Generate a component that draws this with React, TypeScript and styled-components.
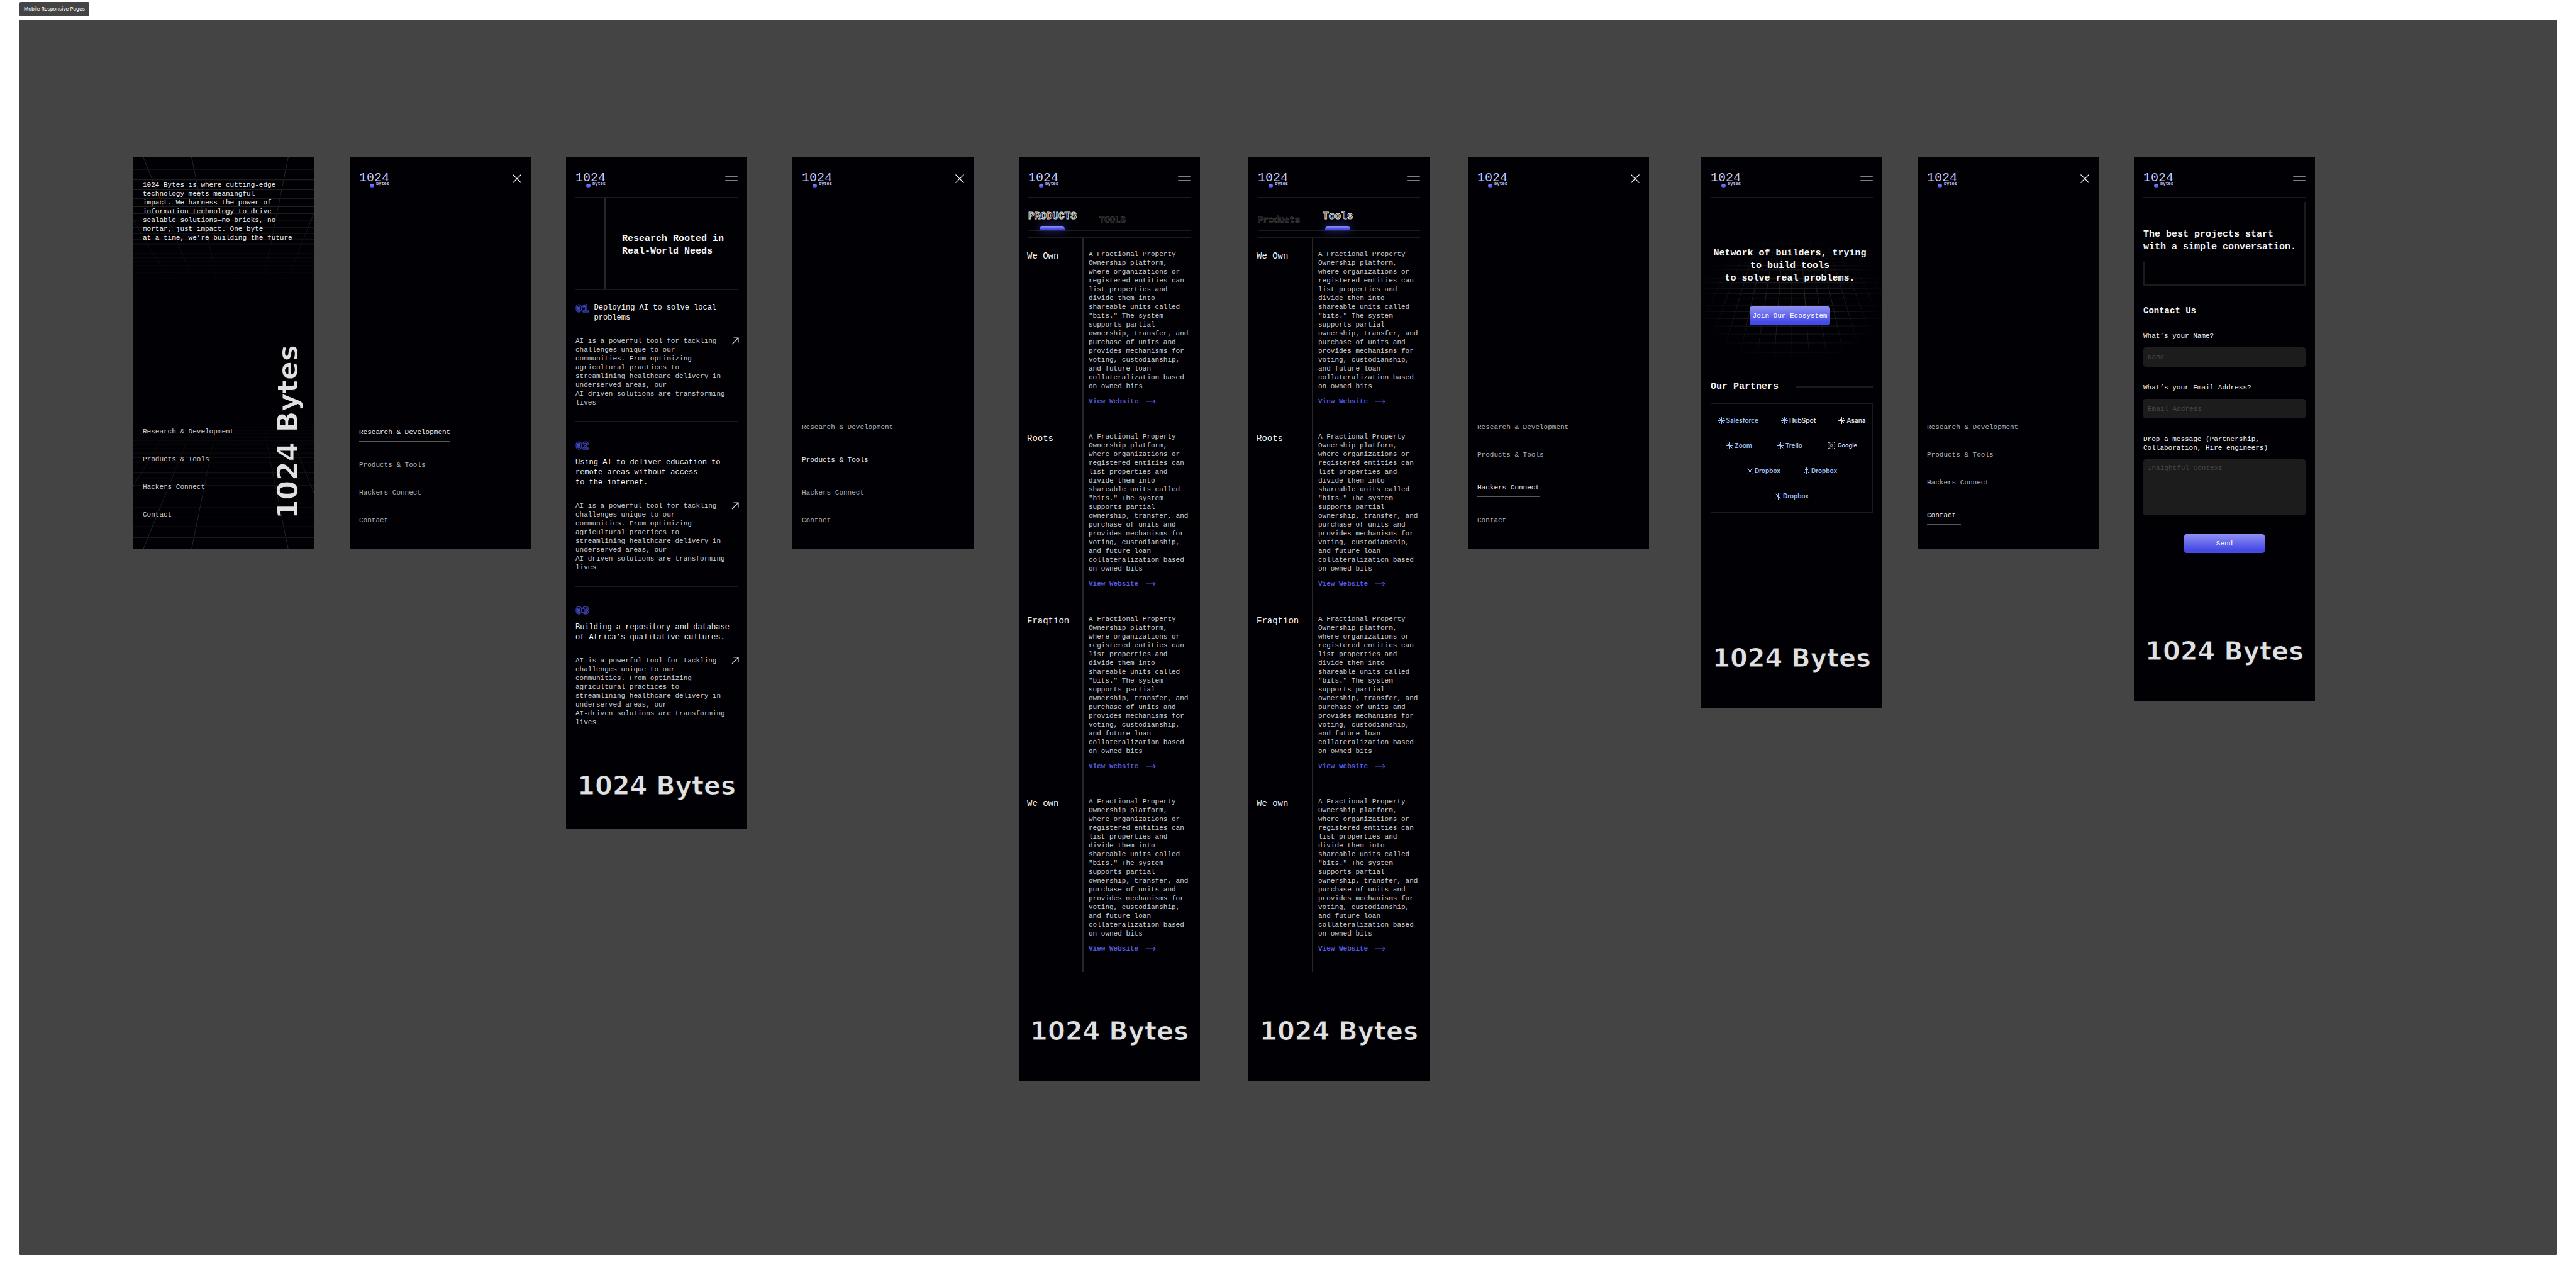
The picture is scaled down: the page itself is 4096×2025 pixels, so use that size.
import React from "react";
import styled, { createGlobalStyle, css } from "styled-components";

const mono = `"Liberation Mono", "DejaVu Sans Mono", monospace`;
const ink = "#010005";
const line = "#1b1b1b";
const indigo = "linear-gradient(180deg, #8f90f2 0%, #4549e6 85%)";

const GlobalStyle = createGlobalStyle`
  *, *::before, *::after { box-sizing: border-box; }
  body { margin: 0; background: #fff; font-family: ${mono}; }
  p, h1, h2, h3, ul { margin: 0; padding: 0; font-weight: 400; }
  ul { list-style: none; }
  a { color: inherit; text-decoration: none; }
  button { border: 0; padding: 0; background: none; font: inherit; color: inherit; }
`;

/* ---------- canvas ---------- */

const Page = styled.main`
  padding: 3px 31px 31px;
`;

const BoardLabel = styled.h1`
  width: fit-content;
  margin-bottom: 5px;
  padding: 0 7px;
  border-radius: 2px;
  background: #444;
  color: #fff;
  font: 400 8px/23px Inter, sans-serif;
`;

const Board = styled.div`
  display: flex;
  align-items: flex-start;
  padding: 219px 0 277px 181px;
  background: #444;
  border-radius: 1px;
`;

const Phone = styled.section<{ $gap?: number; $end?: number }>`
  position: relative;
  flex: 0 0 288px;
  display: flex;
  flex-direction: column;
  min-height: 623px;
  margin-left: ${(p) => p.$gap ?? 0}px;
  padding: 0 15px ${(p) => p.$end ?? 57}px;
  background: ${ink};
  color: #f4f4f4;
  overflow: hidden;
`;

const Backdrop = styled.svg`
  position: absolute;
  inset: 0;
  width: 100%;
  height: 100%;
  pointer-events: none;
`;

/* ---------- header ---------- */

const Header = styled.header<{ $ruled?: boolean }>`
  display: flex;
  justify-content: space-between;
  align-items: flex-start;
  height: 65px;
  padding-top: 22px;
  border-bottom: 2px solid ${(p) => (p.$ruled ? line : "transparent")};
`;

const LogoLink = styled.a`
  display: flex;
  flex-direction: column;
  color: #c6c6f8;
`;

const LogoNumber = styled.span`
  font-size: 20px;
  line-height: 22px;
`;

const LogoTag = styled.span`
  display: flex;
  align-items: flex-end;
  gap: 3px;
  margin: -6px 0 0 17px;
  font: 700 7px/8px ${mono};
  color: #c2c2ee;
`;

const Dot = styled.i`
  width: 7px;
  height: 7px;
  margin-bottom: -3px;
  border-radius: 50%;
  background: linear-gradient(180deg, #8385f6, #3f45e6);
`;

const IconButton = styled.button`
  display: flex;
  align-items: center;
  height: 23px;
  color: #fff;
`;

const CloseIcon = () => (
  <svg width="14" height="14" viewBox="0 0 14 14" stroke="currentColor" strokeWidth="1.2" fill="none">
    <path d="M.5.5l13 13M13.5.5l-13 13" />
  </svg>
);

const MenuIcon = () => (
  <svg width="20" height="9" viewBox="0 0 20 9" stroke="currentColor" strokeWidth="1.2" strokeLinecap="round">
    <path d="M.6.8h18.8M.6 8.2h18.8" />
  </svg>
);

const TopBar = ({ open }: { open?: boolean }) => (
  <Header $ruled={!open}>
    <LogoLink href="#" aria-label="1024 bytes">
      <LogoNumber>1024</LogoNumber>
      <LogoTag>
        <Dot />
        bytes
      </LogoTag>
    </LogoLink>
    <IconButton aria-label={open ? "Close menu" : "Open menu"}>{open ? <CloseIcon /> : <MenuIcon />}</IconButton>
  </Header>
);

/* ---------- menu ---------- */

const Nav = styled.nav`
  position: relative;
  display: flex;
  flex-direction: column;
  align-items: flex-start;
  gap: 30px;
  margin-top: auto;
`;

const NavLink = styled.a<{ $active?: boolean; $bright?: boolean }>`
  font-size: 11px;
  line-height: 14px;
  color: ${(p) => (p.$active ? "#ececec" : p.$bright ? "#d2d2d2" : "#b0b0b0")};
  ${(p) =>
    p.$active &&
    css`
      min-width: 54px;
      padding: 8px 0 7px;
      border-bottom: 1px solid #58585c;
    `}
`;

const LINKS = ["Research & Development", "Products & Tools", "Hackers Connect", "Contact"];

const MainNav = ({ active, bright }: { active?: number; bright?: boolean }) => (
  <Nav>
    {LINKS.map((text, i) => (
      <NavLink key={text} href="#" $active={i === active} $bright={bright}>
        {text}
      </NavLink>
    ))}
  </Nav>
);

const MenuScreen = ({ active, gap }: { active: number; gap: number }) => (
  <Phone $gap={gap} $end={39}>
    <TopBar open />
    <MainNav active={active} />
  </Phone>
);

/* ---------- shared text ---------- */

const Wordmark = styled.p<{ $top: number }>`
  margin-top: ${(p) => p.$top}px;
  font: 700 40px/44px "DejaVu Sans", sans-serif;
  color: #e0e0e0;
  -webkit-text-stroke: 1px ${ink};
  text-align: center;
  white-space: nowrap;
`;

const VerticalWordmark = styled.p`
  position: absolute;
  right: 18px;
  bottom: 48px;
  font: 700 44px/48px "DejaVu Sans", sans-serif;
  color: #e0e0e0;
  -webkit-text-stroke: 1px ${ink};
  white-space: nowrap;
  writing-mode: vertical-rl;
  transform: rotate(180deg);
`;

const Heading = styled.h2`
  position: relative;
  font-size: 15px;
  line-height: 20px;
  font-weight: 700;
  white-space: pre-line;
`;

const Copy = styled.p`
  font-size: 11px;
  line-height: 14px;
  color: #cfcfcf;
  white-space: pre-line;
`;

const ActionButton = styled.button`
  position: relative;
  align-self: center;
  width: 128px;
  height: 30px;
  border-radius: 4px;
  background: ${indigo};
  color: #fff;
  font-size: 11px;
  line-height: 14px;
`;

/* ---------- home ---------- */

const Intro = styled(Copy)`
  position: relative;
  margin-top: 37px;
  color: #f0f0f0;
`;

const ROWS = [76, 117, 155, 190, 221, 248, 276, 302, 325, 347, 366, 384, 402, 419, 434, 449, 463, 476, 488, 500, 512, 523];
const RAYS = [-5, -4, -3, -2, -1, 0, 1, 2, 3, 4, 5];

const HalfGrid = ({ flip }: { flip?: boolean }) => {
  const at = (y: number) => (flip ? 1576 - y : y);
  return (
    <g>
      {ROWS.map((y) => (
        <path key={y} d={`M48 ${at(y)}H1173`} vectorEffect="non-scaling-stroke" />
      ))}
      {RAYS.map((n) => (
        <path key={n} d={`M${710 + n * 300} ${at(30)}L${710 + n * 138} ${at(530)}`} vectorEffect="non-scaling-stroke" />
      ))}
    </g>
  );
};

const TunnelGrid = () => (
  <Backdrop viewBox="48 30 1125 1516" preserveAspectRatio="none" aria-hidden="true">
    <defs>
      <linearGradient id="tunnelFade" x1="0" y1="0" x2="0" y2="1">
        <stop offset="0" stopColor="#fff" />
        <stop offset=".14" stopColor="#fff" stopOpacity=".75" />
        <stop offset=".34" stopColor="#fff" stopOpacity="0" />
        <stop offset=".66" stopColor="#fff" stopOpacity="0" />
        <stop offset=".86" stopColor="#fff" stopOpacity=".75" />
        <stop offset="1" stopColor="#fff" />
      </linearGradient>
      <mask id="tunnelMask" maskUnits="userSpaceOnUse" x="48" y="30" width="1125" height="1516">
        <rect x="48" y="30" width="1125" height="1516" fill="url(#tunnelFade)" />
      </mask>
    </defs>
    <g mask="url(#tunnelMask)" stroke="#2a2a2a" fill="none">
      <HalfGrid />
      <HalfGrid flip />
    </g>
  </Backdrop>
);

/* ---------- research ---------- */

const Hero = styled.div`
  display: grid;
  grid-template-columns: 48px 1fr;
  height: 146px;
  border-bottom: 2px solid ${line};
`;

const HeroRail = styled.div`
  border-right: 2px solid #262626;
`;

const HeroText = styled.div`
  display: flex;
  align-items: center;
  padding: 5px 0 0 26px;
  white-space: nowrap;
`;

const Article = styled.article<{ $inline?: boolean; $last?: boolean }>`
  padding: ${(p) => (p.$inline ? 20 : 28)}px 0 ${(p) => (p.$last ? 0 : 22)}px;
  border-bottom: ${(p) => (p.$last ? 0 : 2)}px solid ${line};
`;

const ArticleHead = styled.header<{ $inline?: boolean }>`
  display: flex;
  flex-direction: ${(p) => (p.$inline ? "row" : "column")};
  gap: 8px;
  margin-bottom: 22px;
`;

const Index = styled.span`
  font-size: 18px;
  line-height: 20px;
  font-weight: 700;
  color: transparent;
  -webkit-text-stroke: 1px #4a4ecb;
`;

const ArticleTitle = styled.h3`
  font-size: 12px;
  line-height: 16px;
  white-space: pre-line;
`;

const ArticleBody = styled.div`
  display: flex;
  justify-content: space-between;
  align-items: flex-start;
  margin-right: -2px;
  color: #d8d8d8;
`;

const DiagonalArrow = () => (
  <svg width="12" height="12" viewBox="0 0 12 12" stroke="currentColor" strokeWidth="1.2" fill="none">
    <path d="M1 11L11 1M3.4 1H11V8.6" />
  </svg>
);

const AI_COPY = `AI is a powerful tool for tackling
challenges unique to our
communities. From optimizing
agricultural practices to
streamlining healthcare delivery in
underserved areas, our
AI-driven solutions are transforming
lives`;

const ARTICLES = [
  { index: "01", title: "Deploying AI to solve local\nproblems" },
  { index: "02", title: "Using AI to deliver education to\nremote areas without access\nto the internet." },
  { index: "03", title: "Building a repository and database\nof Africa’s qualitative cultures." },
];

const ResearchScreen = () => (
  <Phone $gap={56} $end={47}>
    <TopBar />
    <Hero>
      <HeroRail />
      <HeroText>
        <Heading>{"Research Rooted in\nReal-World Needs"}</Heading>
      </HeroText>
    </Hero>
    {ARTICLES.map(({ index, title }, i) => (
      <Article key={index} $inline={i === 0} $last={i === 2}>
        <ArticleHead $inline={i === 0}>
          <Index>{index}</Index>
          <ArticleTitle>{title}</ArticleTitle>
        </ArticleHead>
        <ArticleBody>
          <Copy>{AI_COPY}</Copy>
          <a href="#" aria-label="Read more">
            <DiagonalArrow />
          </a>
        </ArticleBody>
      </Article>
    ))}
    <Wordmark $top={72}>1024 Bytes</Wordmark>
  </Phone>
);

/* ---------- products ---------- */

const Tabs = styled.div`
  display: flex;
  align-items: stretch;
  gap: 36px;
  height: 52px;
  margin-bottom: 10px;
  border-bottom: 2px solid ${line};
`;

const Tab = styled.button<{ $active?: boolean }>`
  position: relative;
  display: flex;
  align-items: flex-start;
  padding-top: ${(p) => (p.$active ? 19 : 25)}px;
  font-size: ${(p) => (p.$active ? 16 : 14)}px;
  line-height: 20px;
  font-weight: 700;
  color: transparent;
  -webkit-text-stroke: 1px ${(p) => (p.$active ? "#e6e6e6" : "#3c3c3c")};
  ${(p) =>
    p.$active &&
    css`
      &::after {
        content: "";
        position: absolute;
        bottom: 0;
        left: 50%;
        width: 40px;
        height: 5px;
        margin-left: -20px;
        border-radius: 4px 4px 0 0;
        background: ${indigo};
        box-shadow: 0 0 14px 2px rgba(80, 84, 232, 0.5);
      }
    `}
`;

const Products = styled.ul`
  border-top: 2px solid ${line};
`;

const ProductName = styled.h3`
  margin-left: -2px;
  padding-top: 19px;
  font-size: 14px;
  line-height: 18px;
`;

const ProductBody = styled.div`
  padding: 18px 0 24px 8px;
  border-left: 2px solid #262626;
`;

const Product = styled.li`
  display: grid;
  grid-template-columns: 86px 1fr;

  &:last-child ${ProductBody} {
    padding-bottom: 30px;
  }
`;

const WebsiteLink = styled.a`
  display: flex;
  align-items: center;
  gap: 12px;
  margin-top: 10px;
  font-size: 11px;
  line-height: 14px;
  font-weight: 700;
  color: #5458de;
`;

const LongArrow = () => (
  <svg width="16" height="8" viewBox="0 0 16 8" stroke="currentColor" strokeWidth="1.1" fill="none">
    <path d="M0 4H15M11.5.8L15 4L11.5 7.2" />
  </svg>
);

const PRODUCT_COPY = `A Fractional Property
Ownership platform,
where organizations or
registered entities can
list properties and
divide them into
shareable units called
"bits." The system
supports partial
ownership, transfer, and
purchase of units and
provides mechanisms for
voting, custodianship,
and future loan
collateralization based
on owned bits`;

const ProductScreen = ({ gap, tabs, active }: { gap: number; tabs: string[]; active: number }) => (
  <Phone $gap={gap}>
    <TopBar />
    <Tabs role="tablist">
      {tabs.map((tab, i) => (
        <Tab key={tab} role="tab" aria-selected={i === active} $active={i === active}>
          {tab}
        </Tab>
      ))}
    </Tabs>
    <Products>
      {["We Own", "Roots", "Fraqtion", "We own"].map((name) => (
        <Product key={name}>
          <ProductName>{name}</ProductName>
          <ProductBody>
            <Copy>{PRODUCT_COPY}</Copy>
            <WebsiteLink href="#">
              View Website
              <LongArrow />
            </WebsiteLink>
          </ProductBody>
        </Product>
      ))}
    </Products>
    <Wordmark $top={72}>1024 Bytes</Wordmark>
  </Phone>
);

/* ---------- ecosystem ---------- */

const Pitch = styled.div`
  display: flex;
  flex-direction: column;
  gap: 34px;
  padding: 78px 6px 88px 0;
  text-align: center;
`;

const PartnersHead = styled.div`
  display: flex;
  align-items: center;
  gap: 28px;
  margin-bottom: 16px;

  &::after {
    content: "";
    flex: 1;
    height: 2px;
    background: ${line};
  }
`;

const PartnersBox = styled.div`
  display: flex;
  flex-direction: column;
  gap: 26px;
  padding: 19px 9px;
  border: 1px solid ${line};
`;

const PartnerRow = styled.ul<{ $gap: number }>`
  display: flex;
  justify-content: center;
  gap: ${(p) => p.$gap}px;
  height: 14px;
`;

const Partner = styled.li<{ $tone: string; $small?: boolean }>`
  display: flex;
  align-items: center;
  gap: ${(p) => (p.$small ? 4 : 2)}px;
  font: 600 ${(p) => (p.$small ? 9 : 10)}px/14px Inter, sans-serif;
  color: ${(p) => p.$tone};
`;

const Star = ({ color }: { color: string }) => (
  <svg width="11" height="11" viewBox="0 0 22 22" stroke={color} strokeWidth="2" fill={color}>
    <path d="M11 0V22M0 11H22M3.5 3.5L18.5 18.5M18.5 3.5L3.5 18.5" />
    <circle cx="11" cy="11" r="3" stroke="none" />
  </svg>
);

const Burst = () => (
  <svg width="12" height="12" viewBox="0 0 24 24" stroke="#dcdce2" strokeWidth="1.8" fill="none">
    <path d="M12 7.2L16.8 12L12 16.8L7.2 12Z" />
    <path d="M7.5 0V5M16.5 0V5M7.5 19V24M16.5 19V24M0 7.5H4M0 16.5H4M20 7.5H24M20 16.5H24M1 1L4 4M23 1L20 4M1 23L4 20M23 23L20 20" />
  </svg>
);

const SKY = "#9abff0";
const PALE = "#dcdce2";

const FLOOR_ROWS = [
  470, 485, 498, 512, 527, 542, 558, 573, 591, 610, 630, 651, 674, 698, 722, 751, 780, 809, 842, 877, 915, 955, 999,
  1046, 1098,
];
const FLOOR_RAYS = Array.from({ length: 27 }, (_, i) => i - 13);

const FloorGrid = () => (
  <Backdrop viewBox="42 42 1125 2979" preserveAspectRatio="none" aria-hidden="true">
    <defs>
      <radialGradient id="floorFade">
        <stop offset="0" stopColor="#fff" />
        <stop offset=".5" stopColor="#fff" stopOpacity=".7" />
        <stop offset="1" stopColor="#fff" stopOpacity="0" />
      </radialGradient>
      <mask id="floorMask" maskUnits="userSpaceOnUse" x="-100" y="400" width="1400" height="800">
        <ellipse cx="605" cy="820" rx="620" ry="360" fill="url(#floorFade)" />
      </mask>
    </defs>
    <g mask="url(#floorMask)" stroke="#292929" fill="none">
      {FLOOR_ROWS.map((y) => (
        <path key={y} d={`M42 ${y}H1167`} vectorEffect="non-scaling-stroke" />
      ))}
      {FLOOR_RAYS.map((n) => (
        <path key={n} d={`M${605 + n * 52} 465L${605 + n * 111} 1150`} vectorEffect="non-scaling-stroke" />
      ))}
    </g>
  </Backdrop>
);

const EcosystemScreen = () => (
  <Phone $gap={83}>
    <FloorGrid />
    <TopBar />
    <Pitch>
      <Heading>{"Network of builders, trying\nto build tools\nto solve real problems."}</Heading>
      <ActionButton>Join Our Ecosystem</ActionButton>
    </Pitch>
    <PartnersHead>
      <Heading>Our Partners</Heading>
    </PartnersHead>
    <PartnersBox>
      <PartnerRow $gap={36}>
        <Partner $tone={SKY}><Star color={SKY} />Salesforce</Partner>
        <Partner $tone={PALE}><Star color={SKY} />HubSpot</Partner>
        <Partner $tone={PALE}><Star color={PALE} />Asana</Partner>
      </PartnerRow>
      <PartnerRow $gap={40}>
        <Partner $tone={SKY}><Star color={SKY} />Zoom</Partner>
        <Partner $tone={SKY}><Star color={SKY} />Trello</Partner>
        <Partner $tone={PALE} $small><Burst />Google</Partner>
      </PartnerRow>
      <PartnerRow $gap={36}>
        <Partner $tone={SKY}><Star color={SKY} />Dropbox</Partner>
        <Partner $tone={SKY}><Star color={SKY} />Dropbox</Partner>
      </PartnerRow>
      <PartnerRow $gap={36}>
        <Partner $tone={SKY}><Star color={SKY} />Dropbox</Partner>
      </PartnerRow>
    </PartnersBox>
    <Wordmark $top={209}>1024 Bytes</Wordmark>
  </Phone>
);

/* ---------- contact ---------- */

const ContactFrame = styled.div`
  position: relative;
  height: 133px;
  margin: 6px 0 30px;
  padding-top: 42px;
  border: solid ${line};
  border-width: 0 2px 2px 0;
  white-space: nowrap;

  &::before {
    content: "";
    position: absolute;
    left: 0;
    bottom: 0;
    width: 2px;
    height: 35px;
    background: ${line};
  }
`;

const FormTitle = styled.h2`
  margin-bottom: 23px;
  font-size: 14px;
  line-height: 20px;
  font-weight: 700;
`;

const Form = styled.form`
  display: flex;
  flex-direction: column;
`;

const Label = styled.label`
  margin-bottom: 11px;
  font-size: 11px;
  line-height: 14px;
  white-space: pre-line;
`;

const field = css`
  width: 100%;
  margin: 0 0 26px;
  padding: 0 7px;
  border: 0;
  border-radius: 4px;
  background: #1c1c1c;
  color: #e0e0e0;
  font: 400 11px/14px ${mono};

  &::placeholder {
    color: #464646;
    opacity: 1;
  }
`;

const Input = styled.input`
  ${field}
  height: 31px;
`;

const TextArea = styled.textarea`
  ${field}
  height: 89px;
  margin-bottom: 30px;
  padding-top: 7px;
  resize: none;
`;

const ContactScreen = () => (
  <Phone $gap={56}>
    <TopBar />
    <ContactFrame>
      <Heading>{"The best projects start\nwith a simple conversation."}</Heading>
    </ContactFrame>
    <FormTitle>Contact Us</FormTitle>
    <Form onSubmit={(e) => e.preventDefault()}>
      <Label htmlFor="name">What’s your Name?</Label>
      <Input id="name" placeholder="Name" />
      <Label htmlFor="email">What’s your Email Address?</Label>
      <Input id="email" type="email" placeholder="Email Address" />
      <Label htmlFor="message">{"Drop a message (Partnership,\nCollaboration, Hire engineers)"}</Label>
      <TextArea id="message" placeholder="Insightful Context" />
      <ActionButton type="submit">Send</ActionButton>
    </Form>
    <Wordmark $top={134}>1024 Bytes</Wordmark>
  </Phone>
);

const HomeScreen = () => (
  <Phone $end={48}>
    <TunnelGrid />
    <Intro>
      {`1024 Bytes is where cutting-edge
technology meets meaningful
impact. We harness the power of
information technology to drive
scalable solutions—no bricks, no
mortar, just impact. One byte
at a time, we’re building the future`}
    </Intro>
    <MainNav bright />
    <VerticalWordmark>1024 Bytes</VerticalWordmark>
  </Phone>
);

export default function App() {
  return (
    <Page>
      <GlobalStyle />
      <BoardLabel>Mobile Responsive Pages</BoardLabel>
      <Board>
        <HomeScreen />
        <MenuScreen gap={56} active={0} />
        <ResearchScreen />
        <MenuScreen gap={72} active={1} />
        <ProductScreen gap={72} tabs={["PRODUCTS", "TOOLS"]} active={0} />
        <ProductScreen gap={77} tabs={["Products", "Tools"]} active={1} />
        <MenuScreen gap={61} active={2} />
        <EcosystemScreen />
        <MenuScreen gap={56} active={3} />
        <ContactScreen />
      </Board>
    </Page>
  );
}
